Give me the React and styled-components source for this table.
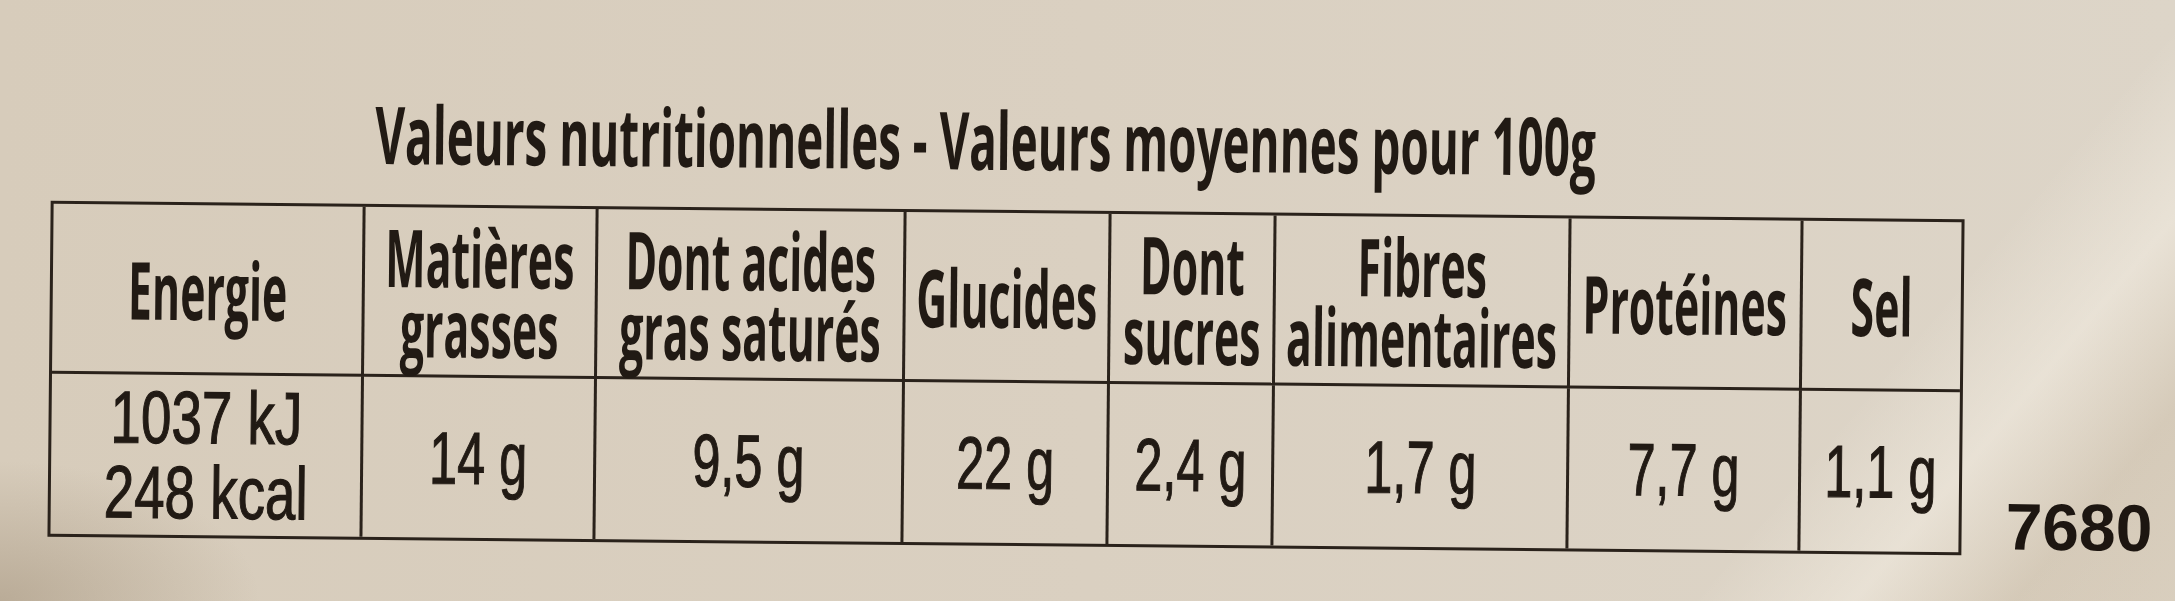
import React from "react";
import styled, { createGlobalStyle } from "styled-components";

const Global = createGlobalStyle`
  html, body { margin: 0; padding: 0; }
  body {
    width: 2175px;
    height: 601px;
    overflow: hidden;
    background: #d8cfc0;
  }
`;

const Page = styled.div`
  box-sizing: border-box;
  width: 2175px;
  height: 601px;
  overflow: hidden;
  padding: 99px 0 0 49px;
  color: #211a14;
  background:
    radial-gradient(ellipse 260px 140px at 0px 601px, rgba(150, 132, 108, 0.45), rgba(150, 132, 108, 0) 100%),
    linear-gradient(130deg, rgba(255,255,255,0) 82%, rgba(255, 250, 240, 0.35) 88%, rgba(190, 170, 140, 0.25) 94%, rgba(200, 180, 150, 0.2) 100%),
    linear-gradient(90deg, #d7ccbb 0%, #dad0c1 50%, #ddd5c8 100%);
`;

const Label = styled.div`
  width: 2126px;
  transform: rotate(0.55deg);
  transform-origin: 957px 280px;
`;

const Title = styled.div`
  height: 80px;
  margin: 0 0 31px 324px;
  font-family: "Open Sans", "DejaVu Sans", sans-serif;
  font-weight: 700;
  font-size: 80px;
  line-height: 80px;
  white-space: nowrap;
`;

const Scaled = styled.span`
  display: inline-block;
  white-space: nowrap;
  text-align: center;
  transform: scaleX(${(p) => p.$sx});
  transform-origin: ${(p) => p.$origin || "center"} center;
`;

const Row = styled.div`
  display: flex;
  align-items: flex-end;
  gap: 44px;
`;

const Table = styled.div`
  display: grid;
  grid-template-columns: 312px 233px 308px 205px 165px 295px 232px 158px;
  grid-template-rows: 170px 160px;
  border: 3px solid #2a221b;
`;

const Cell = styled.div`
  box-sizing: border-box;
  display: flex;
  align-items: center;
  justify-content: center;
  overflow: visible;
  border-right: ${(p) => (p.$last ? "none" : "3px solid #2a221b")};
  border-bottom: ${(p) => (p.$head ? "3px solid #2a221b" : "none")};
`;

const HeadText = styled(Scaled)`
  font-family: "Open Sans", "DejaVu Sans", sans-serif;
  font-weight: 700;
  font-size: 80px;
  line-height: 70px;
`;

const ValueText = styled(Scaled)`
  font-family: "Liberation Sans", Arial, sans-serif;
  font-weight: 400;
  font-size: 74px;
  line-height: 75px;
  -webkit-text-stroke: 1.2px #211a14;
`;

const Code = styled.div`
  font-family: "Liberation Sans", Arial, sans-serif;
  font-weight: 700;
  font-size: 66px;
  line-height: 66px;
  margin-bottom: -4px;
  color: #1d1611;
`;

const heads = [
  ["Energie"],
  ["Matières", "grasses"],
  ["Dont acides", "gras saturés"],
  ["Glucides"],
  ["Dont", "sucres"],
  ["Fibres", "alimentaires"],
  ["Protéines"],
  ["Sel"],
];

const values = [
  ["1037 kJ", "248 kcal"],
  ["14 g"],
  ["9,5 g"],
  ["22 g"],
  ["2,4 g"],
  ["1,7 g"],
  ["7,7 g"],
  ["1,1 g"],
];

const withBreaks = (lines) =>
  lines.map((l, k) => (
    <React.Fragment key={l}>
      {k > 0 && <br />}
      {l}
    </React.Fragment>
  ));

export default function App() {
  return (
    <>
      <Global />
      <Page>
        <Label>
          <Title>
            <Scaled $sx={0.572} $origin="left">
              Valeurs nutritionnelles - Valeurs moyennes pour 100g
            </Scaled>
          </Title>
          <Row>
            <Table>
              {heads.map((lines, i) => (
                <Cell key={"h" + i} $head $last={i === heads.length - 1}>
                  <HeadText $sx={0.535}>{withBreaks(lines)}</HeadText>
                </Cell>
              ))}
              {values.map((lines, i) => (
                <Cell key={"v" + i} $last={i === values.length - 1}>
                  <ValueText $sx={i === 0 ? 0.74 : 0.68}>{withBreaks(lines)}</ValueText>
                </Cell>
              ))}
            </Table>
            <Code>7680</Code>
          </Row>
        </Label>
      </Page>
    </>
  );
}
